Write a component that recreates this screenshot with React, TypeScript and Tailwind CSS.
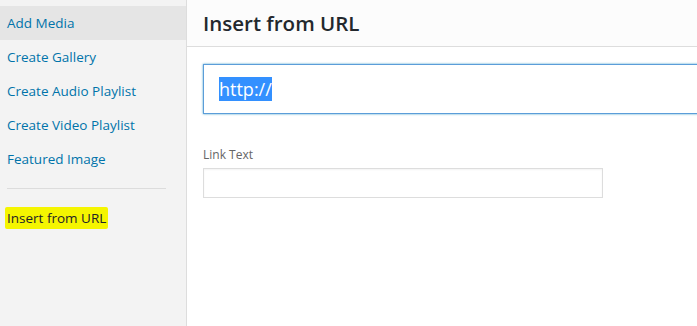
import React from "react";

const menuItems = [
  { label: "Add Media", active: true },
  { label: "Create Gallery" },
  { label: "Create Audio Playlist" },
  { label: "Create Video Playlist" },
  { label: "Featured Image" },
];

const App: React.FC = () => {
  return (
    <div
      className="flex h-[326px] w-[697px] overflow-hidden bg-white"
      style={{ fontFamily: '"Open Sans", "Noto Sans", sans-serif' }}
    >
      {/* Sidebar */}
      <div className="flex w-[187px] shrink-0 flex-col border-r border-[#dddddd] bg-[#f3f3f3] pt-[6px]">
        {menuItems.map((item) => (
          <div
            key={item.label}
            className={`flex h-[34px] items-center pl-[7px] pt-[1px] text-[13.5px] text-[#0073aa] ${
              item.active ? "bg-[#e5e5e5]" : ""
            }`}
          >
            {item.label}
          </div>
        ))}
        <div className="mx-[7px] mt-[12px] w-[159px] border-t border-[#dcdcdc]" />
        <div className="mt-[16px] pl-[5px]">
          <span className="inline-block rounded-[2px] bg-[#f5f500] px-[2px] py-[2px] text-[13.5px] font-medium leading-[18px] text-[#1d2327]">
            Insert from URL
          </span>
        </div>
      </div>

      {/* Content */}
      <div className="flex min-w-0 flex-1 flex-col">
        <div className="flex h-[47px] items-center border-b border-[#dddddd] bg-[#fcfcfc] pl-[16px]">
          <h1 className="text-[20.5px] font-semibold text-[#23282d]">
            Insert from URL
          </h1>
        </div>

        <div className="pl-[16px] pt-[17px]">
          <div className="flex h-[50px] w-[520px] items-center border border-[#5b9dd9] pl-[15px] shadow-[0_0_2px_rgba(30,140,190,0.8)]">
            <span className="bg-[#3390ff] text-[18px] leading-[24px] text-white">
              http://
            </span>
          </div>

          <div className="mt-[32px] text-[12px] text-[#666666]">Link Text</div>
          <div className="mt-[4px] h-[30px] w-[400px] border border-[#dddddd] bg-white shadow-[inset_0_1px_2px_rgba(0,0,0,0.05)]" />
        </div>
      </div>
    </div>
  );
};

export default App;
